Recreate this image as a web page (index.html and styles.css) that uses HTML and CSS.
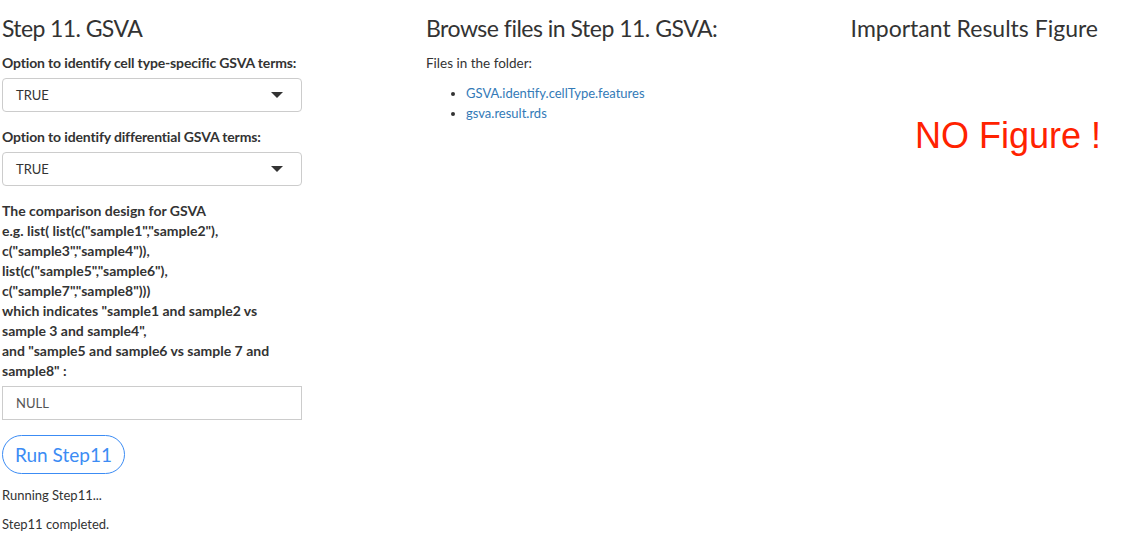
FILE: index.html
```html
<!DOCTYPE html>
<html>
<head>
<meta charset="utf-8">
<link rel="stylesheet" href="styles.css">
</head>
<body>
<div class="row">
  <div class="col-left">
    <h3 class="title t-step">Step 11. GSVA</h3>
    <div class="group">
      <label class="lbl nowrap">Option to identify cell type-specific GSVA terms:</label>
      <div class="select"><span>TRUE</span><span class="caret"></span></div>
    </div>
    <div class="group">
      <label class="lbl nowrap">Option to identify differential GSVA terms:</label>
      <div class="select"><span>TRUE</span><span class="caret"></span></div>
    </div>
    <div class="group">
      <label class="lbl">The comparison design for GSVA<br>e.g. list( list(c("sample1","sample2"),<br>c("sample3","sample4")),<br>list(c("sample5","sample6"),<br>c("sample7","sample8")))<br>which indicates "sample1 and sample2 vs<br>sample 3 and sample4",<br>and "sample5 and sample6 vs sample 7 and<br>sample8" :</label>
      <div class="input">NULL</div>
    </div>
    <button class="btn">Run Step11</button>
    <p class="msg first">Running Step11...</p>
    <p class="msg">Step11 completed.</p>
  </div>
  <div class="col-mid">
    <h3 class="title t-browse">Browse files in Step 11. GSVA:</h3>
    <p class="small">Files in the folder:</p>
    <ul class="files">
      <li><a href="#">GSVA.identify.cellType.features</a></li>
      <li><a href="#">gsva.result.rds</a></li>
    </ul>
  </div>
  <div class="col-right">
    <h3 class="title t-imp">Important Results Figure</h3>
    <div class="nofig">NO Figure !</div>
  </div>
</div>
</body>
</html>
```
FILE: styles.css
```css
body {
  margin: 0;
  font-family: "Lato", "Open Sans", sans-serif;
  color: #333;
  background: #fff;
}
.row {
  display: flex;
  padding: 0 0 0 2px;
}
.col-left {
  width: 300px;
}
.col-mid {
  margin-left: 124px;
  width: 400px;
}
.col-right {
  flex: 1;
  padding-right: 34px;
  text-align: right;
}
.title {
  font-weight: 400;
  font-size: 23px;
  line-height: 28px;
  margin: 14px 0 11px 0;
  color: #333;
}
.t-step {
  letter-spacing: -0.6px;
}
.t-browse {
  letter-spacing: -0.5px;
}
.t-imp {
  letter-spacing: 0;
}
.group {
  margin-bottom: 15px;
}
.lbl {
  display: block;
  font-weight: 700;
  font-size: 14px;
  line-height: 20px;
  margin-bottom: 5px;
}
.nowrap {
  white-space: nowrap;
  letter-spacing: -0.15px;
}
.select {
  box-sizing: border-box;
  height: 34px;
  border: 1px solid #ccc;
  border-radius: 4px;
  display: flex;
  align-items: center;
  justify-content: space-between;
  padding: 0 18px 0 13px;
  font-size: 13px;
}
.caret {
  width: 0;
  height: 0;
  border-left: 6px solid transparent;
  border-right: 6px solid transparent;
  border-top: 6px solid #333;
}
.input {
  box-sizing: border-box;
  height: 34px;
  border: 1px solid #ccc;
  padding: 0 13px;
  display: flex;
  align-items: center;
  font-size: 13px;
  color: #555;
}
.btn {
  display: block;
  margin-top: 1px;
  height: 39px;
  padding: 0 12px;
  border: 1px solid #3c8cf4;
  border-radius: 20px;
  background: #fff;
  color: #3c8cf4;
  font-family: inherit;
  font-size: 19px;
}
.msg {
  font-size: 13px;
  margin: 0;
  line-height: 20px;
}
.msg.first {
  margin-top: 11px;
  margin-bottom: 9px;
}
.small {
  font-size: 13.5px;
  line-height: 20px;
  margin: 0 0 10px 0;
}
.files {
  margin: 0;
  padding-left: 40px;
  font-size: 13px;
  line-height: 20px;
}
.files a {
  color: #337ab7;
  text-decoration: none;
}
.nofig {
  margin-top: 73px;
  margin-right: -3px;
  font-family: "Liberation Sans", Arial, sans-serif;
  color: #ff2200;
  font-size: 36px;
}
```
